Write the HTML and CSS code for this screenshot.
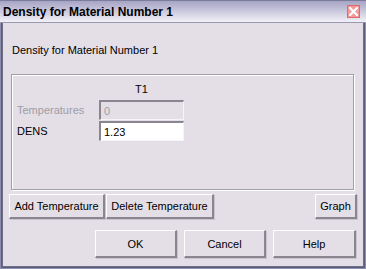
FILE: index.html
```html
<!DOCTYPE html>
<html lang="en">
<head>
    <meta charset="UTF-8">
    <title>Density for Material Number 1</title>
    <link rel="stylesheet" href="styles.css">
</head>
<body>
    <div class="window">
        <div class="titlebar">
            <span class="title">Density for Material Number 1</span>
            <span class="close-btn">
                <svg width="9" height="9" viewBox="0 0 9 9">
                    <path d="M1 1 L8 8 M8 1 L1 8" stroke="#fff" stroke-width="2.2" stroke-linecap="square"/>
                </svg>
            </span>
        </div>

        <div class="client">
            <div class="caption">Density for Material Number 1</div>

            <div class="group-box">
                <div class="table">
                    <span></span>
                    <span class="col-head">T1</span>

                    <span class="row-label disabled">Temperatures</span>
                    <input type="text" class="field" value="0" disabled>

                    <span class="row-label">DENS</span>
                    <input type="text" class="field" value="1.23">
                </div>
            </div>

            <div class="tool-row">
                <button class="btn add-btn">Add Temperature</button>
                <button class="btn del-btn">Delete Temperature</button>
                <button class="btn graph-btn">Graph</button>
            </div>

            <div class="dialog-row">
                <button class="btn dlg-btn">OK</button>
                <button class="btn dlg-btn">Cancel</button>
                <button class="btn dlg-btn help-btn">Help</button>
            </div>
        </div>
    </div>
</body>
</html>
```

FILE: styles.css
```css
body {
    margin: 0;
    background: #e4dfe7;
    font-family: "Liberation Sans", Arial, sans-serif;
    font-size: 11px;
    color: #000;
}

.window {
    width: 366px;
    height: 269px;
    box-sizing: border-box;
    padding: 0 2px 2px 2px;
    background: #e4dfe7;
    box-shadow: inset 0 0 0 1px #8f8fae, inset 0 0 0 2px #5c5c7e;
    display: flex;
    flex-direction: column;
}

.titlebar {
    height: 21px;
    margin: 0 -2px;
    padding: 0 6px 0 3px;
    display: flex;
    align-items: center;
    justify-content: space-between;
    background: linear-gradient(#a6a4c4, #c8c6dc 45%, #f2f1f8);
    border-top: 1px solid #7c7c9c;
    border-bottom: 1px solid #9a98ae;
}

.title {
    font-weight: bold;
    font-size: 12px;
    color: #000;
    margin-top: 1px;
}

.close-btn {
    width: 13px;
    height: 13px;
    box-sizing: border-box;
    display: flex;
    align-items: center;
    justify-content: center;
    background: #f49a9a;
    border: 1px solid #e06a6a;
}

.client {
    flex: 1;
    border-left: 1px solid #6e6e88;
    border-right: 1px solid #6e6e88;
    border-bottom: 1px solid #6e6e88;
    padding: 0 6px 0 6px;
    display: flex;
    flex-direction: column;
}

.caption {
    margin: 21px 0 0 3px;
    line-height: 13px;
}

.group-box {
    margin: 17px 3px 0 2px;
    height: 116px;
    box-sizing: border-box;
    border: 1px solid #a0a0a8;
    box-shadow: 1px 1px 0 #fff, inset 1px 1px 0 #fff;
    padding: 8px 0 0 5px;
}

.table {
    display: grid;
    grid-template-columns: 82px 85px;
    row-gap: 1px;
    align-items: center;
}

.col-head {
    text-align: center;
    line-height: 13px;
    margin-bottom: 3px;
}

.row-label.disabled {
    color: #a09ca4;
}

.field {
    width: 85px;
    height: 20px;
    box-sizing: border-box;
    margin: 0;
    padding: 1px 3px 0;
    font-family: inherit;
    font-size: 11px;
    color: #000;
    background: #fff;
    border-style: solid;
    border-width: 2px 1px 1px 2px;
    border-color: #8a8690 #f6f4f8 #f6f4f8 #8a8690;
    outline: none;
}

.field:disabled {
    background: #e4dfe7;
    color: #a09ca4;
}

.btn {
    height: 25px;
    margin: 0;
    padding: 0 4px;
    font-family: inherit;
    font-size: 11px;
    color: #000;
    background: #e4dfe7;
    border-style: solid;
    border-width: 1px 2px 2px 1px;
    border-color: #fff #8a8690 #8a8690 #fff;
    box-shadow: 1px 1px 0 #c8c4cc;
}

.tool-row {
    display: flex;
    gap: 1px;
    margin: 4px 0 0 0;
}

.add-btn {
    width: 96px;
}

.del-btn {
    width: 108px;
}

.graph-btn {
    width: 42px;
    margin-left: auto;
}

.dialog-row {
    display: flex;
    gap: 7px;
    justify-content: flex-end;
    margin: 11px 1px 0 0;
}

.dlg-btn {
    width: 82px;
    height: 28px;
}

.help-btn {
    width: 83px;
}
```
